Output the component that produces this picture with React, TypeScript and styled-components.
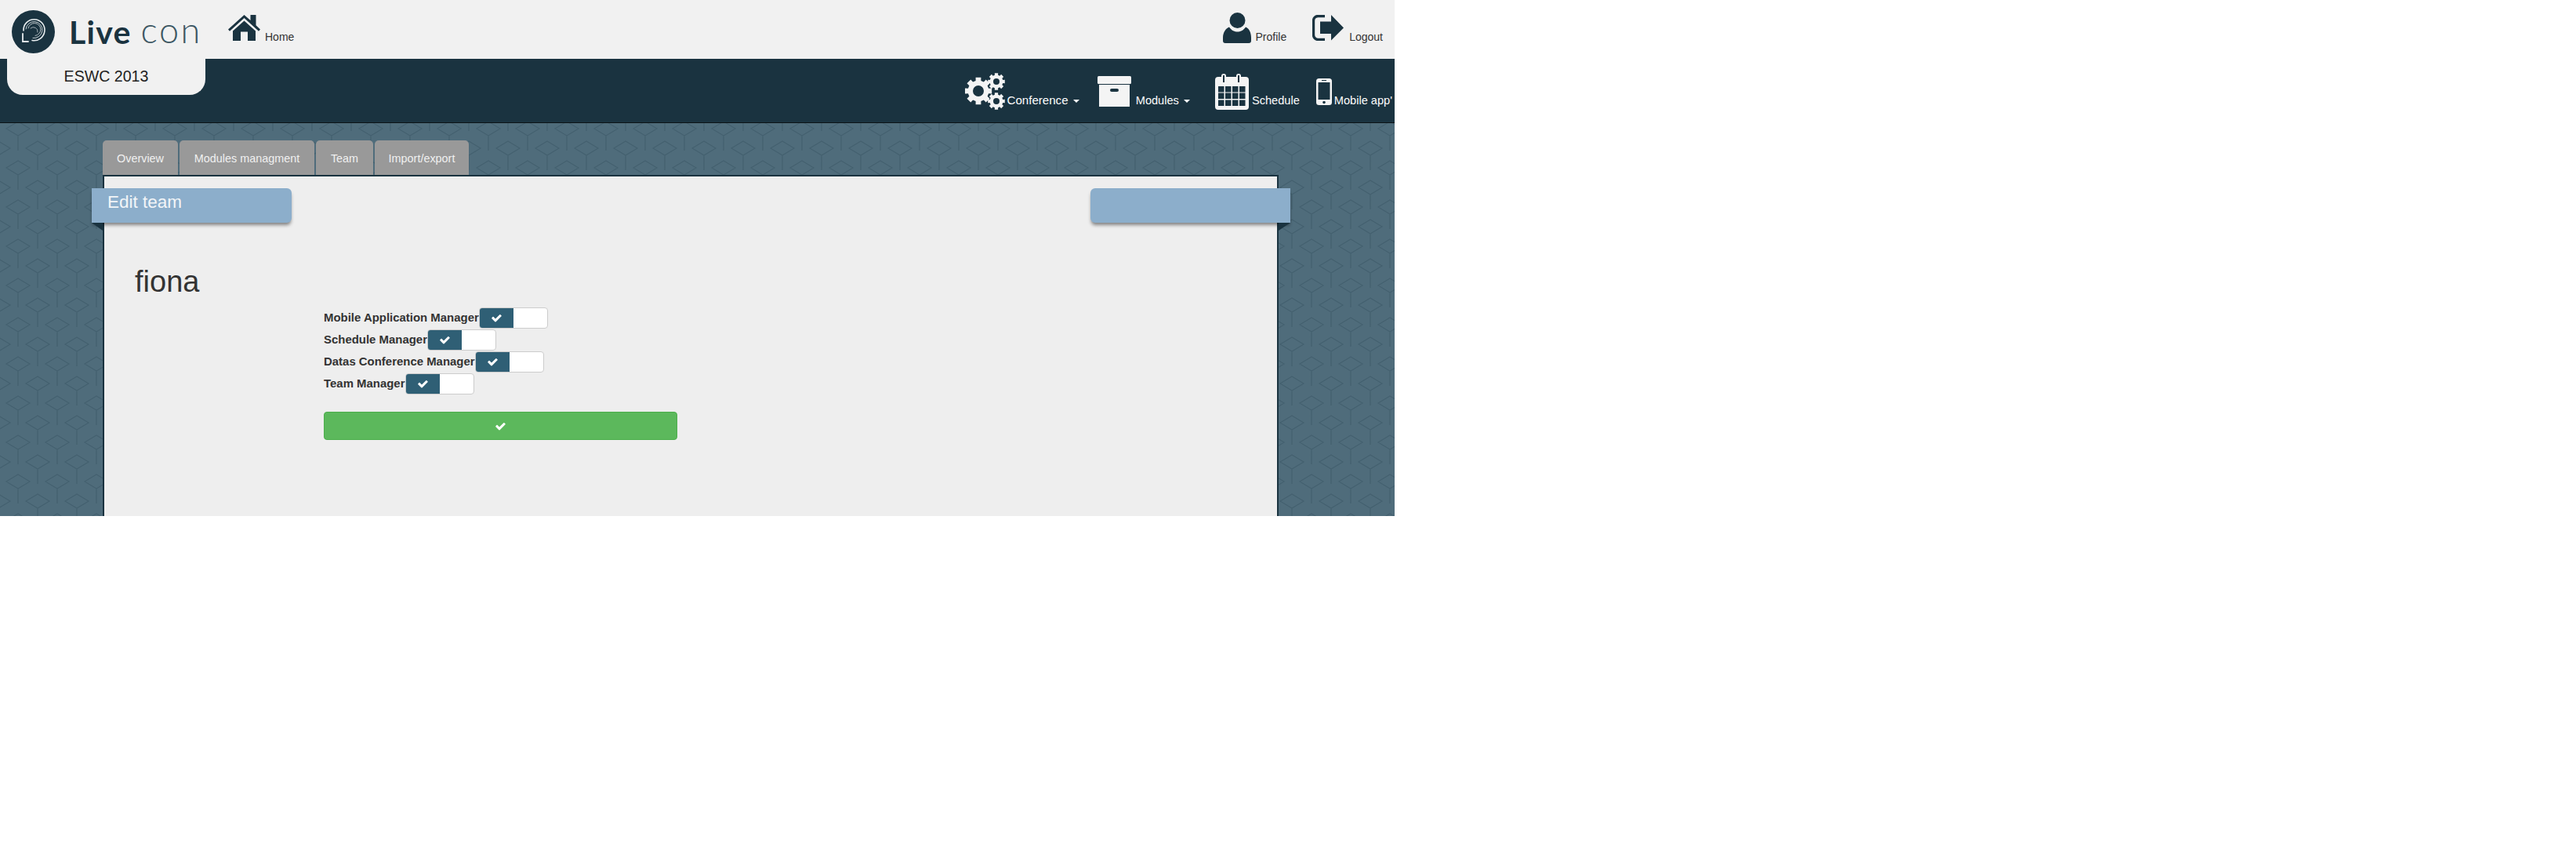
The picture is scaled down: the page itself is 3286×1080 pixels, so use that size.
import React from 'react';
import styled, { createGlobalStyle } from 'styled-components';

const DARK = '#1a3340';

const motif = (x: number, y: number) =>
  `M${x - 15} ${y - 9}L${x} ${y}L${x + 15} ${y - 9}L${x} ${y - 18}ZM${x} ${y}V${y + 19}`;
const tilePath = [
  motif(25, 25),
  motif(0, 0),
  motif(50, 0),
  motif(0, 50),
  motif(50, 50),
  motif(25, 75),
].join('');
const tile = `<svg xmlns='http://www.w3.org/2000/svg' width='50' height='50'><path d='${tilePath}' fill='none' stroke='%2343606f' stroke-width='1.3'/></svg>`;

const Global = createGlobalStyle`
  html, body { margin: 0; padding: 0; background: #fff; }
  body { font-family: "Liberation Sans", Arial, sans-serif; font-size: 14px; color: #333; }
`;

const Page = styled.div`
  width: 1779px;
  height: 658px;
  overflow: hidden;
  display: flex;
  flex-direction: column;
`;

const TopBar = styled.header`
  height: 75px;
  flex: none;
  background: #f1f1f1;
  display: flex;
  align-items: flex-start;
`;

const Logo = styled.div`
  display: flex;
  align-items: flex-start;
  margin: 13px 0 0 15px;
  width: 276px;
  flex: none;
`;

const LogoWord = styled.span<{ $light?: boolean }>`
  font-family: Lato, "Open Sans", sans-serif;
  font-weight: ${(p) => (p.$light ? 300 : 700)};
  font-size: ${(p) => (p.$light ? '45px' : '41px')};
  letter-spacing: ${(p) => (p.$light ? '2.5px' : '1.25px')};
  line-height: 50px;
  margin: ${(p) => (p.$light ? '0 0 0 12px' : '3px 0 0 18px')};
  color: ${(p) => (p.$light ? '#3d5763' : DARK)};
`;

const TopLink = styled.a<{ $iconTop: number; $gap: number; $ml?: number }>`
  display: flex;
  align-items: flex-start;
  margin-left: ${(p) => p.$ml ?? 0}px;
  color: #333;
  font-size: 14px;
  svg { display: block; margin-top: ${(p) => p.$iconTop}px; margin-right: ${(p) => p.$gap}px; flex: none; }
  span { margin-top: 38px; line-height: 18px; }
`;

const TopRight = styled.div`
  margin-left: auto;
  display: flex;
  padding-right: 15px;
`;

const NavBar = styled.nav`
  height: 81px;
  flex: none;
  background: ${DARK};
  border-bottom: 1px solid #0c1316;
  display: flex;
  align-items: flex-start;
`;

const EventTab = styled.div`
  width: 253px;
  height: 46px;
  margin-left: 9px;
  background: #f1f1f1;
  border-radius: 0 0 20px 20px;
  font-size: 19.6px;
  line-height: 44px;
  text-align: center;
  color: #222;
  flex: none;
`;

const NavRight = styled.div`
  margin-left: auto;
  display: flex;
  align-items: flex-start;
  padding-right: 3px;
`;

const NavLink = styled.a<{ $iconTop: number; $gap: number; $ml: number; $size?: number }>`
  display: flex;
  align-items: flex-start;
  margin-left: ${(p) => p.$ml}px;
  color: #fdfdfd;
  font-size: ${(p) => p.$size ?? 14.6}px;
  white-space: nowrap;
  svg { display: block; margin-top: ${(p) => p.$iconTop}px; margin-right: ${(p) => p.$gap}px; flex: none; }
  span { margin-top: 44px; line-height: 18px; }
`;

const Caret = styled.i`
  display: inline-block;
  width: 0;
  height: 0;
  margin-left: 2px;
  vertical-align: middle;
  border-top: 4px solid #fdfdfd;
  border-left: 4px solid transparent;
  border-right: 4px solid transparent;
`;

const Main = styled.main`
  flex: 1;
  min-height: 0;
  background-color: #4f6c7b;
  background-image: url("data:image/svg+xml,${tile}");
  background-position: -2px -9px;
  padding: 22px 0 0 131px;
`;

const Tabs = styled.ul`
  list-style: none;
  display: flex;
  margin: 0;
  padding: 0;
  height: 45px;
  gap: 2px;
`;

const Tab = styled.li<{ $w: number }>`
  width: ${(p) => p.$w}px;
  height: 45px;
  background: #999;
  color: #f0f0f0;
  border-radius: 5px 5px 0 0;
  text-align: center;
  line-height: 46px;
  font-size: 14.4px;
`;

const Panel = styled.section`
  position: relative;
  width: 1500px;
  height: 600px;
  margin-top: -1px;
  box-sizing: border-box;
  background: #eee;
  border: 2px solid ${DARK};
  padding: 112px 0 0 39px;
`;

const Ribbon = styled.div<{ $side: 'left' | 'right' }>`
  position: absolute;
  top: 15px;
  ${(p) => (p.$side === 'left' ? 'left: -16px;' : 'right: -17px;')}
  width: 255px;
  height: 44px;
  background: #8caecb;
  color: #f2f5f8;
  font-size: 22.5px;
  line-height: 36px;
  padding-left: 20px;
  box-sizing: border-box;
  box-shadow: 0 4px 4px -1px rgba(0, 0, 0, 0.45);
  border-radius: ${(p) => (p.$side === 'left' ? '0 6px 6px 0' : '6px 0 0 6px')};
  &::after {
    content: '';
    position: absolute;
    top: 100%;
    ${(p) => p.$side}: 0;
    width: 0;
    height: 0;
    border-top: 10px solid ${DARK};
    ${(p) => (p.$side === 'left' ? 'border-left: 14px solid transparent;' : 'border-right: 15px solid transparent;')}
  }
`;

const Name = styled.h1`
  margin: 0;
  font-size: 38px;
  font-weight: 400;
  line-height: 44px;
  color: #333;
  height: 44px;
`;

const Form = styled.form`
  margin: 11px 0 0 241px;
  width: 451px;
`;

const Row = styled.div`
  display: flex;
  align-items: flex-start;
  height: 28px;
`;

const Label = styled.label`
  font-weight: 700;
  font-size: 14.95px;
  line-height: 26px;
  color: #333;
  white-space: nowrap;
`;

const Toggle = styled.div`
  width: 88px;
  height: 27px;
  box-sizing: border-box;
  border: 1px solid #ccc;
  border-radius: 4px;
  display: flex;
  overflow: hidden;
  background: #fff;
`;

const ToggleOn = styled.div`
  width: 43px;
  background: #2f5f75;
  display: flex;
  align-items: center;
  justify-content: center;
`;

const Submit = styled.button`
  display: flex;
  align-items: center;
  justify-content: center;
  width: 451px;
  height: 36px;
  margin-top: 21px;
  padding: 0;
  background: #5cb85c;
  border: 1px solid #4cae4c;
  border-radius: 4px;
`;

const Check = ({ size = 13 }: { size?: number }) => (
  <svg width={size} height={size} viewBox="100 200 1600 1400" fill="#fff">
    <path d="M1671 566q0 40-28 68l-724 724-136 136q-28 28-68 28t-68-28l-136-136-362-362q-28-28-28-68t28-68l136-136q28-28 68-28t68 28l294 295 656-657q28-28 68-28t68 28l136 136q28 28 28 68z" />
  </svg>
);

const LogoMark = () => (
  <svg width="55" height="55" viewBox="0 0 55 55">
    <circle cx="27.5" cy="27.5" r="27.5" fill={DARK} />
    <g fill="none" stroke="#e8edef" strokeLinecap="round">
      <path d="M15 26A13.5 13.5 0 1 1 26 38.5" strokeWidth="1.6" />
      <path d="M18 24A10.5 10.5 0 1 1 27 35.5" strokeWidth="1" opacity=".85" />
      <path d="M21 23A8 8 0 1 1 30 32.5" strokeWidth="1" opacity=".75" />
      <path d="M24 23A5.5 5.5 0 0 1 33 28" strokeWidth="1" opacity=".65" />
      <path d="M14 30V40H21" strokeWidth="1.8" />
    </g>
  </svg>
);

const HomeIcon = () => (
  <svg width="41" height="33" viewBox="0 0 41 33" fill={DARK}>
    <path d="M0 18.6L20.5 0 28.5 7V0H35.5V13.3L41 18.6 39 20.8 20.5 4 2 20.8Z" />
    <path d="M20.5 7.5L35 20.5V33H25V21.5H16V33H6V20.5Z" />
  </svg>
);

const UserIcon = () => (
  <svg width="36" height="39" viewBox="0 0 36 39" fill={DARK}>
    <circle cx="18.5" cy="10" r="10" />
    <path d="M8 18.5C11 23 15 24.5 18.5 24.5S26 23 29 18.5C33 20 36 25 36 32V36Q36 39 33 39H3Q0 39 0 36V32C0 25 4 20 8 18.5Z" />
  </svg>
);

const LogoutIcon = () => (
  <svg width="40" height="33" viewBox="0 0 40 33" fill={DARK}>
    <path d="M16 1.5H7A6 6 0 0 0 1.5 7.5V25.5A6 6 0 0 0 7.5 31.5H16" fill="none" stroke={DARK} strokeWidth="3.4" />
    <path d="M10 8.5H24V0L40 16.5 24 32.5V24H10Z" />
  </svg>
);

const gear = (cx: number, cy: number, ro: number, ri: number, hole: number, teeth: number) => {
  const pts: string[] = [];
  const step = (Math.PI * 2) / teeth;
  for (let k = 0; k < teeth; k++) {
    const a = k * step;
    const spec: [number, number][] = [
      [-0.32, ri],
      [-0.25, ro],
      [0.25, ro],
      [0.32, ri],
    ];
    spec.forEach(([d, r]) => {
      pts.push(`${(cx + r * Math.cos(a + d * step)).toFixed(2)} ${(cy + r * Math.sin(a + d * step)).toFixed(2)}`);
    });
  }
  return (
    `M${pts.join('L')}Z` +
    `M${cx - hole} ${cy}a${hole} ${hole} 0 1 0 ${hole * 2} 0a${hole} ${hole} 0 1 0 ${-hole * 2} 0Z`
  );
};

const CogsIcon = () => (
  <svg width="51" height="47" viewBox="0 0 51 47" fill="#f4f4f4" fillRule="evenodd">
    <path d={gear(17, 23, 17.5, 13.5, 7, 8)} />
    <path d={gear(40, 11, 11, 8.5, 4, 8)} />
    <path d={gear(40, 36, 11, 8.5, 4, 8)} />
  </svg>
);

const BoxIcon = () => (
  <svg width="43" height="39" viewBox="0 0 43 39" fill="#f4f4f4">
    <rect x="0" y="0" width="43" height="10" rx="1.5" />
    <path fillRule="evenodd" d="M2 11H41V39H2ZM18 16Q16 16 16 18T18 20H25Q27 20 27 18T25 16Z" />
  </svg>
);

const CalendarIcon = () => (
  <svg width="43" height="46" viewBox="0 0 43 46">
    <path fill="#f4f4f4" d="M4 4H8V3Q8 0 11 0T14 3V4H27V3Q27 0 30 0T33 3V4H39Q43 4 43 8V42Q43 46 39 46H4Q0 46 0 42V8Q0 4 4 4Z" />
    <g fill={DARK}>
      <rect x="10" y="2" width="2" height="9" />
      <rect x="29" y="2" width="2" height="9" />
      {[4, 13, 22, 31].map((x) =>
        [16, 24.5, 33.5].map((y) => <rect key={`${x}-${y}`} x={x} y={y} width="7.5" height="7.5" />),
      )}
    </g>
  </svg>
);

const MobileIcon = () => (
  <svg width="20" height="34" viewBox="0 0 20 34">
    <rect width="20" height="34" rx="3.5" fill="#f4f4f4" />
    <rect x="2.5" y="5" width="15" height="22" fill={DARK} />
    <rect x="7" y="2" width="6" height="1" fill={DARK} />
    <circle cx="10" cy="30.5" r="1.8" fill={DARK} />
  </svg>
);

const roles: { name: string }[] = [
  { name: 'Mobile Application Manager' },
  { name: 'Schedule Manager' },
  { name: 'Datas Conference Manager' },
  { name: 'Team Manager' },
];

const tabs: { name: string; w: number }[] = [
  { name: 'Overview', w: 96 },
  { name: 'Modules managment', w: 172 },
  { name: 'Team', w: 73 },
  { name: 'Import/export', w: 120 },
];

export default function App() {
  return (
    <Page>
      <Global />
      <TopBar>
        <Logo>
          <LogoMark />
          <LogoWord>Live</LogoWord>
          <LogoWord $light>con</LogoWord>
        </Logo>
        <TopLink $iconTop={19} $gap={6}>
          <HomeIcon />
          <span>Home</span>
        </TopLink>
        <TopRight>
          <TopLink $iconTop={16} $gap={5}>
            <UserIcon />
            <span>Profile</span>
          </TopLink>
          <TopLink $iconTop={19} $gap={7} $ml={33}>
            <LogoutIcon />
            <span>Logout</span>
          </TopLink>
        </TopRight>
      </TopBar>
      <NavBar>
        <EventTab>ESWC 2013</EventTab>
        <NavRight>
          <NavLink $iconTop={18} $gap={3} $ml={0} $size={15.1}>
            <CogsIcon />
            <span>
              Conference <Caret />
            </span>
          </NavLink>
          <NavLink $iconTop={22} $gap={6} $ml={23}>
            <BoxIcon />
            <span>
              Modules <Caret />
            </span>
          </NavLink>
          <NavLink $iconTop={19} $gap={4} $ml={32}>
            <CalendarIcon />
            <span>Schedule</span>
          </NavLink>
          <NavLink $iconTop={25} $gap={3} $ml={21}>
            <MobileIcon />
            <span>Mobile app'</span>
          </NavLink>
        </NavRight>
      </NavBar>
      <Main>
        <Tabs>
          {tabs.map((t) => (
            <Tab key={t.name} $w={t.w}>
              {t.name}
            </Tab>
          ))}
        </Tabs>
        <Panel>
          <Ribbon $side="left">Edit team</Ribbon>
          <Ribbon $side="right" />
          <Name>fiona</Name>
          <Form>
            {roles.map((r) => (
              <Row key={r.name}>
                <Label>{r.name}</Label>
                <Toggle>
                  <ToggleOn>
                    <Check />
                  </ToggleOn>
                </Toggle>
              </Row>
            ))}
            <Submit type="button">
              <Check />
            </Submit>
          </Form>
        </Panel>
      </Main>
    </Page>
  );
}
